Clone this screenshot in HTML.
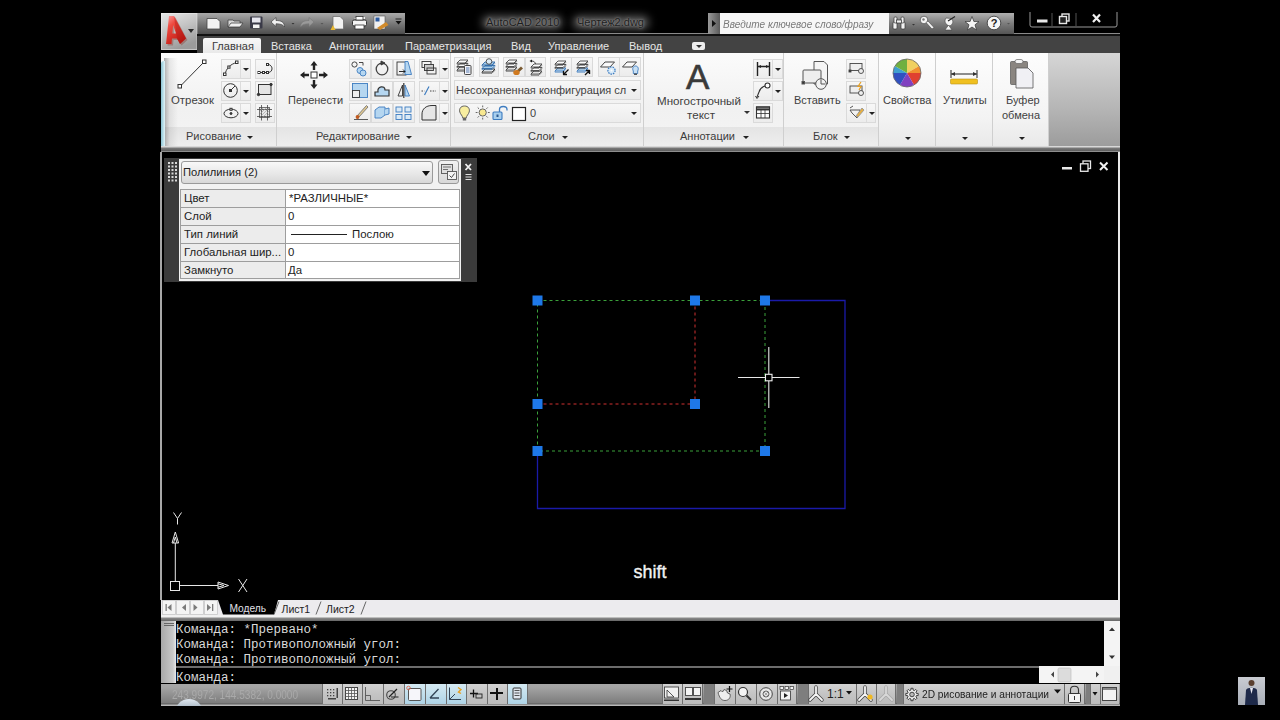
<!DOCTYPE html>
<html><head><meta charset="utf-8">
<style>
*{margin:0;padding:0;box-sizing:border-box}
html,body{width:1280px;height:720px;overflow:hidden;background:#000}
body{position:relative;font-family:"Liberation Sans",sans-serif;font-size:11px;color:#333;-webkit-font-smoothing:antialiased}
.a{position:absolute}
.t{position:absolute;white-space:nowrap;line-height:1}
svg{position:absolute;overflow:visible}
/* title */
#appbtn{left:161px;top:13px;width:37px;height:37px;background:#555}
#qat{left:197px;top:13px;width:208px;height:21px;background:linear-gradient(#a9a9a9,#7a7a7a 50%,#4d4d4d)}
#search{left:708px;top:13px;width:181px;height:21px;background:#f6f6f6}
#searcharr{left:708px;top:13px;width:12px;height:21px;background:linear-gradient(90deg,#9a9a9a,#5a5a5a)}
#info{left:889px;top:13px;width:125px;height:21px;background:linear-gradient(#b0b0b0,#7c7c7c 50%,#555)}
#tabrow{left:197px;top:34px;width:923px;height:19px;background:#434343;border-top:2px solid #111}
#tabact{left:203px;top:38px;width:58px;height:15px;background:linear-gradient(#f8f8f8,#e9e9e9);border-radius:2px 2px 0 0}
.tab{top:41px;font-size:11px;color:#e6e6e6}
/* ribbon */
#ribbon{left:161px;top:53px;width:959px;height:93px;background:#f4f4f4}
.panel{position:absolute;top:0;height:93px;background:linear-gradient(#fbfbfb,#f1f1f1 60%,#f4f4f4);border-right:1px solid #cfcfcf}
.ptitle{position:absolute;left:0;right:0;bottom:0;height:19px;background:linear-gradient(#e4e4e4,#eeeeee)}
.ptxt{position:absolute;top:4px;font-size:11px;color:#3c3c3c;white-space:nowrap;line-height:1}
.btn{position:absolute;border:1px solid #dadada;background:linear-gradient(#f7f7f7,#ececec)}
.lbl{position:absolute;font-size:11px;color:#3f3f3f;white-space:nowrap;line-height:1}
.dd{position:absolute;width:0;height:0;border-left:3px solid transparent;border-right:3px solid transparent;border-top:3.5px solid #222;margin-left:.5px;margin-top:.5px}
#ribbot{left:161px;top:146px;width:959px;height:6px;background:linear-gradient(#d8d8d8 0,#d8d8d8 1px,#7a7a7a 2px,#5e5e5e 5px,#bdbdbd 6px)}
#gray{left:1049px;top:53px;width:71px;height:93px;background:linear-gradient(#d6d6d6,#b5b5b5 60%,#9c9c9c)}
/* drawing */
#leftedge{left:160px;top:152px;width:2px;height:448px;background:#a8a8a8}
#rightedge{left:1118px;top:152px;width:2px;height:448px;background:#e8e8e8}
/* palette */
#pal{left:164px;top:158px;width:313px;height:124px;background:#3b3b3b}
#palin{left:179px;top:159px;width:282px;height:122px;background:#f2f2f2}
/* tabs */
#mtabs{left:161px;top:600px;width:959px;height:15px;background:#ecebee}
#mtabbot{left:161px;top:615px;width:959px;height:6px;background:linear-gradient(#f0f0f0 0,#f0f0f0 2px,#8a8a8a 3px,#666 6px)}
#cmdstrip{left:161px;top:621px;width:15px;height:62px;background:linear-gradient(90deg,#a8a8a8,#c8c8c8 80%,#e8e8e8)}
.cmd{position:absolute;left:176px;font-family:"Liberation Mono",monospace;font-size:12.5px;color:#dadada;white-space:pre;line-height:1}
#status{left:161px;top:684px;width:959px;height:22px;background:linear-gradient(#a6a6a6 0,#a4a4a4 3px,#8e8e8e 12px,#7c7c7c 19px,#5a5a5a 20px,#c0c0c0 21px,#b0b0b0 22px)}
.sb{position:absolute;top:684px;height:20px;background:linear-gradient(#d2d2d2,#c4c4c4 50%,#bcbcbc);border-left:1px solid #6e6e6e}
.sbon{background:linear-gradient(#d4e9f2,#c2dfec 50%,#aed3e6)}
.sgap{position:absolute;top:684px;height:20px;background:#7e7e7e}
</style></head><body>

<!-- ======= TITLE BAR ======= -->
<div class="a" id="appbtn"></div>
<div class="a" id="qat"></div>
<div class="a" style="left:482px;top:16px;width:80px;height:13px;background:#5a5a5a;filter:blur(4px);border-radius:6px"></div>
<div class="a" style="left:573px;top:16px;width:76px;height:13px;background:#5a5a5a;filter:blur(4px);border-radius:6px"></div>
<div class="t" style="left:486px;top:17px;font-size:11px;color:#1e1e1e;text-shadow:0 0 2px #9a9a9a,0 0 4px #808080">AutoCAD 2010</div>
<div class="t" style="left:577px;top:17px;font-size:11px;color:#1e1e1e;text-shadow:0 0 2px #9a9a9a,0 0 4px #808080">Чертеж2.dwg</div>
<div class="a" style="left:405px;top:33px;width:303px;height:1px;background:#8a8a8a"></div>
<div class="a" id="search"></div>
<div class="a" id="searcharr"></div>
<div class="t" style="left:723px;top:19px;font-size:11px;font-style:italic;color:#7a7a7a;transform:scaleX(.91);transform-origin:0 0">Введите ключевое слово/фразу</div>
<div class="a" id="info"></div>
<div class="a" style="left:1014px;top:33px;width:106px;height:1px;background:#8a8a8a"></div>


<!-- app logo -->
<svg class="a" style="left:161px;top:13px" width="36" height="37" viewBox="161 13 36 37">
 <defs><linearGradient id="ared" x1="0" y1="0" x2=".6" y2="1"><stop offset="0" stop-color="#f7a0a0"/><stop offset=".35" stop-color="#ee4a40"/><stop offset="1" stop-color="#c01a12"/></linearGradient>
 <linearGradient id="abg" x1="0" y1="0" x2=".4" y2="1"><stop offset="0" stop-color="#e8e8e8"/><stop offset=".5" stop-color="#c4c4c4"/><stop offset="1" stop-color="#9c9c9c"/></linearGradient></defs>
 <rect x="161" y="13" width="36" height="37" fill="url(#abg)"/>
 <rect x="161.5" y="13.5" width="35.5" height="36" fill="none" stroke="#f0f0f0" stroke-opacity=".5" stroke-width="1"/>
 <path d="M166 44 L169 16 L174 16 L186 38.5 L180 44 L177 38.5 L172 38.5 L171.5 44 Z M172.3 33.5 L176 33.5 L173.2 25 Z" fill="#8a2a20" opacity=".35" transform="translate(1.5 1.5)" fill-rule="evenodd"/>
 <path d="M166 44 L169 16 L174 16 L186 38.5 L180 44 L177 38.5 L172 38.5 L171.5 44 Z M172.3 33.5 L176 33.5 L173.2 25 Z" fill="url(#ared)" fill-rule="evenodd"/>
 <path d="M174 16 L186 38.5 L180 44 L177 38.5 Z" fill="#a81410" opacity=".35"/>
 <path d="M188 29 L194 29 L191 33 Z" fill="#2a2a2a"/>
</svg>
<!-- QAT icons -->
<svg class="a" style="left:197px;top:13px" width="208" height="21" viewBox="197 13 208 21">
 <path d="M207 18.5 H217 L220 21.5 V29 H207 Z" fill="#f2f2f2" stroke="#444" stroke-width=".8"/>
 <path d="M228 20 H233 L234 21 H240 V27 H228 Z" fill="#d8d8d8" stroke="#444" stroke-width=".8"/><path d="M228 27 L231 23 H243 L240 27 Z" fill="#eee" stroke="#444" stroke-width=".8"/>
 <rect x="250" y="16.5" width="12.5" height="12" rx="1" fill="#3a3a48"/><rect x="252" y="17.5" width="8.5" height="5" fill="#e6e6ee"/><rect x="253" y="24.5" width="6.5" height="3.5" fill="#f4f4f4"/>
 <path d="M271 22 L276 17.5 V20.5 C281 20.5 284.5 22 284.5 27 C283 24.5 280 23.8 276 23.8 V26.5 Z" fill="#f0f0f0" stroke="#444" stroke-width=".7"/>
 <path d="M291.5 23 H294.5 L293 24.5 Z" fill="#333"/>
 <path d="M314 22 L309 17.5 V20.5 C304 20.5 300.5 22 300.5 27 C302 24.5 305 23.8 309 23.8 V26.5 Z" fill="#9a9a9a" stroke="#777" stroke-width=".6"/>
 <path d="M320.5 23 H323.5 L322 24.5 Z" fill="#555"/>
 <path d="M333 16.5 H340 L343.5 20 V29 H333 Z" fill="#f2f2f2" stroke="#666" stroke-width=".7"/><path d="M330.5 30 L333 25 L335.5 30 Z" fill="#e8b830"/>
 <path d="M354 19 H365 V17 H357 Z" fill="#eee"/><rect x="352.5" y="20" width="14" height="6" rx="1.5" fill="#f4f4f4" stroke="#333" stroke-width="1"/><rect x="355" y="25" width="9" height="4" fill="#fff" stroke="#333" stroke-width=".8"/><rect x="356" y="16.5" width="7" height="3.5" fill="#fff" stroke="#333" stroke-width=".8"/>
 <rect x="374" y="16" width="11" height="13" fill="#f0f0f0" stroke="#555" stroke-width=".6"/><rect x="375.5" y="17.5" width="4" height="4" fill="#2c5aa0"/><path d="M377 28 L386 22 L388.5 25 L380 30 Z" fill="#d08a2a"/>
 <rect x="395.5" y="18.5" width="6" height="1" fill="#222"/><path d="M395.5 21 H401.5 L398.5 24.5 Z" fill="#111"/>
</svg>
<!-- search arrow -->
<svg class="a" style="left:708px;top:13px" width="12" height="21" viewBox="708 13 12 21"><path d="M712 20 L716 23.5 L712 27 Z" fill="#111"/></svg>
<!-- infocenter icons -->
<svg class="a" style="left:889px;top:13px" width="125" height="21" viewBox="889 13 125 21">
 <g fill="#f2f2f2" stroke="#333" stroke-width=".7">
  <rect x="893" y="22" width="4" height="7" rx="1"/><rect x="901" y="22" width="4" height="7" rx="1"/><rect x="894" y="17" width="3" height="6" rx="1"/><rect x="901" y="17" width="3" height="6" rx="1"/><rect x="896.5" y="20" width="5" height="3"/>
 </g>
 <path d="M912 24 H915 L913.5 25.5 Z" fill="#333"/>
 <g><circle cx="924" cy="20" r="3.8" fill="#f4f4f4" stroke="#444" stroke-width=".7"/><circle cx="923.5" cy="19.5" r="1.2" fill="#777"/><path d="M926 22.5 L932 29 L934 27.5 L928 21 Z" fill="#f4f4f4" stroke="#444" stroke-width=".6"/></g>
 <g><path d="M946 18 C944 21 945 25 950 26 C953 24 954 21 951 18.5 Z" fill="#f4f4f4" stroke="#444" stroke-width=".6"/><path d="M948 21 L955 16.5" stroke="#222" stroke-width="1.2"/><path d="M945 30 L948.5 25 L952 30 Z" fill="#f4f4f4" stroke="#444" stroke-width=".6"/></g>
 <path d="M972 16.5 L973.9 21.5 L979 21.6 L975 24.8 L976.5 30 L972 27 L967.5 30 L969 24.8 L965 21.6 L970.1 21.5 Z" fill="#f4f4f4" stroke="#333" stroke-width=".7"/>
 <circle cx="994" cy="23" r="6.8" fill="#f6f6f6" stroke="#333" stroke-width=".8"/>
 <text x="994" y="27.3" font-family="Liberation Sans" font-weight="bold" font-size="11" text-anchor="middle" fill="#222">?</text>
 <path d="M1007 23 H1010 L1008.5 24.5 Z" fill="#555"/>
</svg>
<!-- window controls -->
<svg class="a" style="left:1028px;top:10px" width="92" height="20" viewBox="1028 10 92 20">
 <path d="M1030 12 V25 Q1030 27 1032 27 H1115 Q1117 27 1117 25 V12" fill="none" stroke="#9a9a9a" stroke-width="1"/>
 <path d="M1052 13 V26 M1076 13 V26" stroke="#555" stroke-width="1"/>
 <rect x="1037" y="19.5" width="10.5" height="3" fill="#e8e8e8"/>
 <rect x="1062" y="14" width="7" height="7" fill="none" stroke="#e8e8e8" stroke-width="1.4"/><rect x="1059.5" y="16.5" width="7" height="7" fill="#222" stroke="#e8e8e8" stroke-width="1.4"/>
 <path d="M1093 14.5 L1100 22 M1100 14.5 L1093 22" stroke="#f0f0f0" stroke-width="2.2"/>
</svg>

<!-- tab row -->
<div class="a" id="tabrow"></div>
<div class="a" id="tabact"></div>
<div class="t tab" style="left:212px;color:#3a3a3a">Главная</div>
<div class="t tab" style="left:271px">Вставка</div>
<div class="t tab" style="left:329px">Аннотации</div>
<div class="t tab" style="left:405px">Параметризация</div>
<div class="t tab" style="left:511px">Вид</div>
<div class="t tab" style="left:548px">Управление</div>
<div class="t tab" style="left:629px">Вывод</div>
<div class="a" style="left:692px;top:42px;width:13px;height:8px;background:#eee;border-radius:2px"></div><div class="dd" style="left:695px;top:44px;border-top-color:#333"></div>

<!-- ======= RIBBON ======= -->
<div class="a" id="ribbon">
<!-- P1 Рисование -->
<div class="panel" style="left:0;width:116px"><div class="ptitle"></div></div>
<!-- P2 -->
<div class="panel" style="left:116px;width:174px"><div class="ptitle"></div></div>
<!-- P3 -->
<div class="panel" style="left:290px;width:193px"><div class="ptitle"></div></div>
<!-- P4 -->
<div class="panel" style="left:483px;width:140px"><div class="ptitle"></div></div>
<!-- P5 -->
<div class="panel" style="left:623px;width:95px"><div class="ptitle"></div></div>
<!-- P6 -->
<div class="panel" style="left:718px;width:57px;background:linear-gradient(#fdfdfd,#f3f3f3 70%,#e9e9e9)"></div>
<div class="panel" style="left:775px;width:57px;background:linear-gradient(#fdfdfd,#f3f3f3 70%,#e9e9e9)"></div>
<div class="panel" style="left:832px;width:56px;background:linear-gradient(#fdfdfd,#f3f3f3 70%,#e9e9e9)"></div>
</div>
<div class="a" id="gray"></div>
<!-- ribbon content (page coords) -->
<div class="a" style="left:164px;top:58px;width:14px;height:88px;background:linear-gradient(90deg,rgba(80,80,80,.45),rgba(120,120,120,.15) 40%,rgba(255,255,255,0))"></div>
<div class="a" style="left:161px;top:61px;width:4px;height:85px;background:linear-gradient(90deg,#8cc4d4,#e2f4f8);border-radius:3px 0 0 0"></div>
<!-- P1 buttons -->
<div class="btn" style="left:221px;top:59px;width:30px;height:20px"></div><div class="a" style="left:240px;top:60px;width:1px;height:18px;background:#dcdcdc"></div>
<div class="btn" style="left:221px;top:81px;width:30px;height:20px"></div><div class="a" style="left:240px;top:82px;width:1px;height:18px;background:#dcdcdc"></div>
<div class="btn" style="left:221px;top:103px;width:30px;height:20px"></div><div class="a" style="left:240px;top:104px;width:1px;height:18px;background:#dcdcdc"></div>
<div class="dd" style="left:242px;top:67px"></div><div class="dd" style="left:242px;top:89px"></div><div class="dd" style="left:242px;top:111px"></div>
<div class="btn" style="left:255px;top:59px;width:20px;height:20px"></div>
<div class="btn" style="left:255px;top:81px;width:20px;height:20px"></div>
<div class="btn" style="left:255px;top:103px;width:20px;height:20px"></div>
<div class="lbl" style="left:171px;top:95px;font-size:11.4px">Отрезок</div>
<div class="ptxt" style="left:186px;top:131px">Рисование</div><div class="dd" style="left:246px;top:135px"></div>
<!-- P2 buttons -->
<div class="btn" style="left:349px;top:59px;width:22px;height:20px"></div>
<div class="btn" style="left:371px;top:59px;width:22px;height:20px"></div>
<div class="btn" style="left:393px;top:59px;width:22px;height:20px"></div>
<div class="btn" style="left:349px;top:81px;width:22px;height:20px"></div>
<div class="btn" style="left:371px;top:81px;width:22px;height:20px"></div>
<div class="btn" style="left:393px;top:81px;width:22px;height:20px"></div>
<div class="btn" style="left:349px;top:103px;width:22px;height:20px"></div>
<div class="btn" style="left:371px;top:103px;width:22px;height:20px"></div>
<div class="btn" style="left:393px;top:103px;width:22px;height:20px"></div>
<div class="btn" style="left:419px;top:59px;width:30px;height:20px"></div><div class="a" style="left:439px;top:60px;width:1px;height:18px;background:#dcdcdc"></div>
<div class="btn" style="left:419px;top:81px;width:30px;height:20px"></div><div class="a" style="left:439px;top:82px;width:1px;height:18px;background:#dcdcdc"></div>
<div class="btn" style="left:419px;top:103px;width:30px;height:20px"></div><div class="a" style="left:439px;top:104px;width:1px;height:18px;background:#dcdcdc"></div>
<div class="dd" style="left:441px;top:67px"></div><div class="dd" style="left:441px;top:89px"></div><div class="dd" style="left:441px;top:111px"></div>
<div class="lbl" style="left:288px;top:95px">Перенести</div>
<div class="ptxt" style="left:316px;top:131px">Редактирование</div><div class="dd" style="left:405px;top:135px"></div>
<!-- P3 -->
<div class="btn" style="left:454px;top:57px;width:20px;height:20px"></div>
<div class="btn" style="left:479px;top:57px;width:20px;height:20px"></div>
<div class="btn" style="left:503px;top:57px;width:22px;height:20px"></div><div class="btn" style="left:525px;top:57px;width:21px;height:20px"></div>
<div class="btn" style="left:550px;top:57px;width:22px;height:20px"></div><div class="btn" style="left:571px;top:57px;width:22px;height:20px"></div>
<div class="btn" style="left:598px;top:57px;width:22px;height:20px"></div><div class="btn" style="left:619px;top:57px;width:22px;height:20px"></div>
<div class="btn" style="left:454px;top:80px;width:187px;height:20px"></div>
<div class="lbl" style="left:456px;top:85px">Несохраненная конфигурация сл</div><div class="dd" style="left:630px;top:88px"></div>
<div class="btn" style="left:454px;top:103px;width:187px;height:20px"></div>
<div class="lbl" style="left:530px;top:108px">0</div><div class="dd" style="left:630px;top:111px"></div>
<div class="ptxt" style="left:528px;top:131px">Слои</div><div class="dd" style="left:561px;top:135px"></div>
<!-- P4 -->
<div class="t" style="left:686px;top:59px;font-size:35px;color:#3a3a3a;-webkit-text-stroke:.6px #3a3a3a">A</div>
<div class="lbl" style="left:657px;top:95px;font-size:11.6px">Многострочный</div>
<div class="lbl" style="left:687px;top:109px;font-size:11.6px">текст</div>
<div class="dd" style="left:743px;top:110px;border-top-color:#333"></div>
<div class="btn" style="left:753px;top:59px;width:30px;height:20px"></div><div class="a" style="left:772px;top:60px;width:1px;height:18px;background:#dcdcdc"></div>
<div class="btn" style="left:753px;top:81px;width:30px;height:20px"></div><div class="a" style="left:772px;top:82px;width:1px;height:18px;background:#dcdcdc"></div>
<div class="btn" style="left:753px;top:103px;width:20px;height:20px"></div>
<div class="dd" style="left:774px;top:67px"></div><div class="dd" style="left:774px;top:89px"></div>
<div class="ptxt" style="left:680px;top:131px">Аннотации</div><div class="dd" style="left:742px;top:135px"></div>
<!-- P5 -->
<div class="lbl" style="left:794px;top:95px">Вставить</div>
<div class="btn" style="left:846px;top:59px;width:20px;height:20px"></div>
<div class="btn" style="left:846px;top:81px;width:20px;height:20px"></div>
<div class="btn" style="left:846px;top:103px;width:30px;height:20px"></div><div class="a" style="left:866px;top:104px;width:1px;height:18px;background:#dcdcdc"></div>
<div class="dd" style="left:868px;top:111px"></div>
<div class="ptxt" style="left:813px;top:131px">Блок</div><div class="dd" style="left:843px;top:135px"></div>
<!-- P6-8 -->
<div class="lbl" style="left:883px;top:95px">Свойства</div><div class="dd" style="left:904px;top:136px"></div>
<div class="lbl" style="left:943px;top:95px">Утилиты</div><div class="dd" style="left:961px;top:136px"></div>
<div class="lbl" style="left:1006px;top:95px">Буфер</div>
<div class="lbl" style="left:1002px;top:110px">обмена</div><div class="dd" style="left:1018px;top:136px"></div>

<div class="a" id="ribbot"></div>


<!-- ribbon icons -->
<svg class="a" style="left:161px;top:53px" width="959" height="93" viewBox="161 53 959 93">
 <g fill="none" stroke="#333" stroke-width="1">
  <!-- line -->
  <path d="M180 86.5 L204 62"/><rect x="178" y="84.5" width="3.5" height="3.5" fill="#fff"/><rect x="202.5" y="60" width="3.5" height="3.5" fill="#fff"/>
  <!-- polyline arc -->
  <path d="M225 74.5 C226 69 230 64 237 62.5"/><rect x="223.5" y="73" width="2.5" height="2.5" fill="#fff"/><rect x="235.5" y="61" width="2.5" height="2.5" fill="#fff"/><rect x="227.8" y="66" width="2.2" height="2.2" fill="#fff"/>
  <!-- circle -->
  <circle cx="230.5" cy="90.5" r="6.8"/><path d="M230.5 90.5 L235 86"/><rect x="229.5" y="89.5" width="2" height="2" fill="#333"/>
  <!-- ellipse -->
  <ellipse cx="231" cy="113.5" rx="7" ry="4.3"/><circle cx="231" cy="113.5" r="1" fill="#333"/><rect x="230" y="108.3" width="2" height="2" fill="#fff"/>
  <!-- spline-like -->
  <path d="M259 72.5 H268 C272 72.5 273 68 271 66 C270 64.5 268.5 64.5 267.5 64.5"/><rect x="258" y="71.5" width="2" height="2" fill="#fff"/><rect x="262.5" y="71.5" width="2" height="2" fill="#fff"/><rect x="266.5" y="63.5" width="2" height="2" fill="#fff"/><rect x="266.5" y="71.5" width="2" height="2" fill="#fff"/>
  <!-- rect -->
  <rect x="258.5" y="84.5" width="12.5" height="10" fill="#e4e4e4"/><circle cx="258.5" cy="94.5" r="1.2" fill="#333"/><circle cx="271" cy="84.5" r="1.2" fill="#333"/>
  <!-- hatch -->
  <rect x="259.5" y="107.5" width="10" height="10" fill="#e8e8e8" stroke="#555" stroke-width=".8"/><path d="M257 109.5 H272 M257 116.5 H272 M261.5 105 V120.5 M267.5 105 V120.5" stroke="#444" stroke-width=".8"/><path d="M260 111 L263 108 M260 114 L266 108 M260 117 L269 108 M263 117 L269 111 M266 117 L269 114" stroke="#999" stroke-width=".6"/>
 </g>
 <!-- move -->
 <g fill="#222">
  <rect x="311" y="72" width="6" height="6" fill="#fff" stroke="#333" stroke-width="1"/>
  <path d="M314 61 L317.5 65.5 H315.2 V70 H312.8 V65.5 H310.5 Z"/>
  <path d="M314 89 L317.5 84.5 H315.2 V80 H312.8 V84.5 H310.5 Z"/>
  <path d="M300 75 L304.5 71.5 V73.8 H309 V76.2 H304.5 V78.5 Z"/>
  <path d="M328 75 L323.5 71.5 V73.8 H319 V76.2 H323.5 V78.5 Z"/>
 </g>
 <g fill="none" stroke="#333" stroke-width=".9">
  <!-- copy -->
  <circle cx="354.5" cy="64.5" r="2.6"/><circle cx="360" cy="70.5" r="3" fill="#b5d6f0" stroke="#3d7cc0"/><circle cx="363" cy="73" r="3" fill="#b5d6f0" stroke="#3d7cc0"/><path d="M359 62.5 H363 V65.5"/>
  <!-- rotate -->
  <circle cx="382" cy="69" r="5.8" stroke-width="1.3" stroke="#444"/><path d="M381 61 L385 63 L381 65 Z" fill="#444"/>
  <!-- stretch -->
  <rect x="397" y="62" width="9" height="13"/><path d="M405 61.5 H408 L411.5 74.5 H405 Z" fill="#b5d6f0" stroke="#3d7cc0"/><path d="M399 71.5 H405 M403 69.5 L405 71.5 L403 73.5" stroke="#111"/>
  <!-- draworder -->
  <rect x="422" y="61.5" width="9" height="6"/><rect x="424.5" y="64.5" width="9" height="6" fill="#ccc"/><rect x="427" y="68" width="9" height="6"/>
  <!-- scale -->
  <rect x="352.5" y="83.5" width="15" height="14" fill="#b5d6f0" stroke="#3d7cc0"/><rect x="352.5" y="90.5" width="7" height="7" fill="#eee" stroke="#333"/>
  <!-- fillet-like -->
  <path d="M375 96 V92 H378 C377 86 385 85 385 90 H389 V96 Z" fill="#b5d6f0" stroke="#333" stroke-width="1.2"/>
  <!-- mirror -->
  <path d="M398 96 L402.5 85 V96 Z"/><path d="M405 96 V85 L409.5 96 Z" fill="#b5d6f0" stroke="#3d7cc0"/><path d="M403.8 83 V98" stroke-width="1.2"/>
  <!-- break -->
  <path d="M421.5 91 H424.5 M430 91 H436" stroke-dasharray="1.5 1.2"/><path d="M424.5 95 L429 86.5" stroke="#3d7cc0" stroke-width="1.2"/>
  <!-- erase -->
  <path d="M354 119.5 H368" stroke-width=".8"/><path d="M357 116 L366.5 105.5 L368 107 L359 117" fill="#e0c890" stroke="#777"/><circle cx="357.5" cy="117" r="1.9" fill="#c05a20" stroke="none"/>
  <!-- offset/3d -->
  <path d="M375 110 L379 107 H385 V115 L381 118 H375 Z" fill="#b5d6f0" stroke="#3d7cc0"/><path d="M385 109 L389 108 V114 L385 115" fill="#b5d6f0" stroke="#3d7cc0"/>
  <!-- array -->
  <rect x="396" y="107" width="6" height="5" stroke="#3d7cc0" fill="#dbeaf6"/><rect x="405" y="107" width="6" height="5" stroke="#3d7cc0" fill="#dbeaf6"/><rect x="396" y="114.5" width="6" height="5" stroke="#3d7cc0" fill="#dbeaf6"/><rect x="405" y="114.5" width="6" height="5" stroke="#3d7cc0" fill="#dbeaf6"/>
  <!-- fillet -->
  <path d="M422 120 V114 C422 109 426 105.5 432 105.5 H436 V120 Z" fill="#e6e6e6" stroke="#333" stroke-width="1"/>
 </g>
 <!-- layer icons -->
 <g stroke-linejoin="round">
<path d="M460 67 H468 L465 70 H457 Z" fill="#fafafa" stroke="#444" stroke-width=".9"/><path d="M457 70 V71.2 H465 L468 68.2" fill="none" stroke="#444" stroke-width=".7"/><path d="M460 63.5 H468 L465 66.5 H457 Z" fill="#fafafa" stroke="#444" stroke-width=".9"/><path d="M457 66.5 V67.7 H465 L468 64.7" fill="none" stroke="#444" stroke-width=".7"/><path d="M460 60 H468 L465 63 H457 Z" fill="#fafafa" stroke="#444" stroke-width=".9"/><path d="M457 63 V64.2 H465 L468 61.2" fill="none" stroke="#444" stroke-width=".7"/><rect x="464.5" y="65.5" width="6.5" height="9" rx=".8" fill="#f4f4f8" stroke="#444" stroke-width="1"/><path d="M466 68 H469.5 M466 70 H469.5 M466 72 H469.5" stroke="#2c5aa0" stroke-width=".8"/>
<path d="M485 69 H495 L492 72 H482 Z" fill="#f4f4f4" stroke="#333" stroke-width=".9"/><path d="M482 72 V73.2 H492 L495 70.2" fill="none" stroke="#333" stroke-width=".7"/><path d="M485 65.5 H495 L492 68.5 H482 Z" fill="#a8cdea" stroke="#2f6aa8" stroke-width=".9"/><path d="M482 68.5 V69.7 H492 L495 66.7" fill="none" stroke="#2f6aa8" stroke-width=".7"/><path d="M485 62 H495 L492 65 H482 Z" fill="#a8cdea" stroke="#2f6aa8" stroke-width=".9"/><path d="M482 65 V66.2 H492 L495 63.2" fill="none" stroke="#2f6aa8" stroke-width=".7"/><circle cx="489" cy="61.5" r="2.8" fill="#dcecf8" stroke="#444" stroke-width=".9"/>
<path d="M509 67 H517 L514 70 H506 Z" fill="#fafafa" stroke="#444" stroke-width=".9"/><path d="M506 70 V71.2 H514 L517 68.2" fill="none" stroke="#444" stroke-width=".7"/><path d="M509 63.5 H517 L514 66.5 H506 Z" fill="#fafafa" stroke="#444" stroke-width=".9"/><path d="M506 66.5 V67.7 H514 L517 64.7" fill="none" stroke="#444" stroke-width=".7"/><path d="M509 60 H517 L514 63 H506 Z" fill="#fafafa" stroke="#444" stroke-width=".9"/><path d="M506 63 V64.2 H514 L517 61.2" fill="none" stroke="#444" stroke-width=".7"/><path d="M516 71 L521 66.5 L523 68.5 L518 73 Z" fill="#7a5a30"/><ellipse cx="516.5" cy="72.5" rx="3.2" ry="2.6" fill="#d07a20"/>
<path d="M534 71 H542 L539 74 H531 Z" fill="#fafafa" stroke="#444" stroke-width=".9"/><path d="M531 74 V75.2 H539 L542 72.2" fill="none" stroke="#444" stroke-width=".7"/><path d="M534 67.5 H542 L539 70.5 H531 Z" fill="#fafafa" stroke="#444" stroke-width=".9"/><path d="M531 70.5 V71.7 H539 L542 68.7" fill="none" stroke="#444" stroke-width=".7"/><path d="M534 64 H542 L539 67 H531 Z" fill="#fafafa" stroke="#444" stroke-width=".9"/><path d="M531 67 V68.2 H539 L542 65.2" fill="none" stroke="#444" stroke-width=".7"/><path d="M529.5 61 L532 59.5 V62.5 Z" fill="#111"/><path d="M531.5 61 C534 61 535 62 535.5 64" fill="none" stroke="#333" stroke-width=".9"/>
<path d="M558 68 H566 L563 71 H555 Z" fill="#b8d8f0" stroke="#3d7cc0" stroke-width=".9"/><path d="M555 71 V72.2 H563 L566 69.2" fill="none" stroke="#3d7cc0" stroke-width=".7"/><path d="M558 64.5 H566 L563 67.5 H555 Z" fill="#fafafa" stroke="#444" stroke-width=".9"/><path d="M555 67.5 V68.7 H563 L566 65.7" fill="none" stroke="#444" stroke-width=".7"/><path d="M558 61 H566 L563 64 H555 Z" fill="#fafafa" stroke="#444" stroke-width=".9"/><path d="M555 64 V65.2 H563 L566 62.2" fill="none" stroke="#444" stroke-width=".7"/><path d="M568.5 69.5 L564 74 M563.5 71 V74.5 H567" fill="none" stroke="#111" stroke-width="1.3"/>
<path d="M580 68 H588 L585 71 H577 Z" fill="#b8d8f0" stroke="#3d7cc0" stroke-width=".9"/><path d="M577 71 V72.2 H585 L588 69.2" fill="none" stroke="#3d7cc0" stroke-width=".7"/><path d="M580 64.5 H588 L585 67.5 H577 Z" fill="#fafafa" stroke="#444" stroke-width=".9"/><path d="M577 67.5 V68.7 H585 L588 65.7" fill="none" stroke="#444" stroke-width=".7"/><path d="M580 61 H588 L585 64 H577 Z" fill="#fafafa" stroke="#444" stroke-width=".9"/><path d="M577 64 V65.2 H585 L588 62.2" fill="none" stroke="#444" stroke-width=".7"/><path d="M585 75 L589.5 70.5 M586 70.5 H589.5 V74" fill="none" stroke="#111" stroke-width="1.4"/>
<path d="M605 62 H614.5 L610 67 H600.5 Z" fill="#fafafa" stroke="#444" stroke-width="1"/><circle cx="611.5" cy="70.5" r="3.6" fill="#d8eaf8" stroke="#3d7cc0" stroke-width="1.2" stroke-dasharray="1.6 .9"/><circle cx="611.5" cy="70.5" r="1" fill="#fff"/>
<path d="M627 62 H636.5 L632 67 H622.5 Z" fill="#fafafa" stroke="#444" stroke-width="1"/><path d="M635.5 66 C633 66 632 68.5 633.3 71 V73.5 H637.7 V71 C639 68.5 638 66 635.5 66 Z" fill="#c8e0f4" stroke="#3d7cc0" stroke-width=".9"/><rect x="634" y="73.5" width="3" height="1.5" fill="#555"/>
 </g>
 <!-- layer state row -->
 <path d="M464.5 106 C460.5 106 459 109 459.8 112 C460.5 114.5 462.5 115.5 462.8 118 H466.2 C466.5 115.5 468.5 114.5 469.2 112 C470 109 468.5 106 464.5 106 Z" fill="#f8eea0" stroke="#555" stroke-width=".9"/><rect x="462.8" y="118" width="3.4" height="2.5" fill="#666"/>
 <g stroke="#666" stroke-width="1"><circle cx="482.7" cy="112.5" r="3.6" fill="#f8e890"/><path d="M482.7 105.5 V107.3 M482.7 117.7 V119.5 M475.7 112.5 H477.5 M487.9 112.5 H489.7 M477.7 107.5 L479 108.8 M486.4 116.2 L487.7 117.5 M477.7 117.5 L479 116.2 M486.4 108.8 L487.7 107.5"/></g>
 <rect x="493" y="112" width="9" height="7.5" rx="1" fill="#a8cfee" stroke="#3d7cc0" stroke-width="1.1"/><path d="M499.5 112 V109.5 C499.5 105.5 507 105.5 507 109.5 V110.5" fill="none" stroke="#3d7cc0" stroke-width="1.3"/><rect x="496.5" y="114.5" width="2" height="2.5" fill="#2a5a90"/>
 <rect x="512.5" y="107.5" width="13" height="13" fill="#fff" stroke="#222" stroke-width="1.2"/>
 <!-- big A -->
 <!-- dim -->
 <g stroke="#333" fill="none" stroke-width="1.1">
  <path d="M757.5 62 V76 M769.5 62 V76 M757.5 66.5 H769.5" stroke="#222" stroke-width="1.4"/><path d="M758 66.5 L761 65 V68 Z M769 66.5 L766 65 V68 Z" fill="#222" stroke="none"/>
  <path d="M757 97 L759 92 C760 88 762 87 765 86" /><circle cx="767.5" cy="85.5" r="2.5" fill="#fff"/><path d="M755.5 96 L757 98.5 L759 96" stroke-width="1"/>
  <rect x="756.5" y="107" width="13" height="11" fill="#fff"/><path d="M756.5 110 H769.5 M756.5 113.5 H769.5 M761 110 V118 M765 110 V118" stroke-width=".8"/><rect x="756.5" y="107" width="13" height="2.5" fill="#777"/>
 </g>
 <!-- insert block -->
 <g stroke="#555" fill="#f0f0f0" stroke-width="1">
  <path d="M814 61.5 H824 L827.5 65 V84 H814 Z" fill="#f5f5f5"/>
  <rect x="803" y="70" width="18" height="13" rx="1" fill="#eee"/>
  <circle cx="821" cy="84" r="5.3" fill="#f2f2f2"/><path d="M821 79.5 V84 H825" fill="none"/>
  <rect x="802" y="81.5" width="2.5" height="2.5" fill="#333"/>
 </g>
 <g stroke="#444" fill="#eee" stroke-width=".9">
  <rect x="850" y="63.5" width="12" height="7"/><circle cx="861" cy="71" r="2.5"/><rect x="849" y="70" width="2" height="2" fill="#333"/>
  <rect x="850" y="86" width="12" height="7"/><circle cx="861" cy="93" r="2.5"/><path d="M861 82 L858 86.5 H861 L859 90" stroke="#e8a020" fill="none" stroke-width="1.2"/>
  <path d="M850 108 L853 106 M850 110 H860 L857 118 L852 113 Z" fill="none"/><path d="M856 116 L862 108 L864 110 L858 117 Z" fill="#e8b040" stroke="#999"/>
 </g>
 <!-- color wheel -->
 <g transform="translate(907 73)">
  <path d="M0 0 L0 -14 A14 14 0 0 1 12.1 -7 Z" fill="#f0d060"/>
  <path d="M0 0 L12.1 -7 A14 14 0 0 1 14 0 Z" fill="#f09030"/>
  <path d="M0 0 L14 0 A14 14 0 0 1 7 12.1 Z" fill="#e04030"/>
  <path d="M0 0 L7 12.1 A14 14 0 0 1 -7 12.1 Z" fill="#8040c0"/>
  <path d="M0 0 L-7 12.1 A14 14 0 0 1 -14 0 Z" fill="#3050c0"/>
  <path d="M0 0 L-14 0 A14 14 0 0 1 -12.1 -7 Z" fill="#40a0d0"/>
  <path d="M0 0 L-12.1 -7 A14 14 0 0 1 0 -14 Z" fill="#70b040"/>
  <circle r="14" fill="none" stroke="#666" stroke-width=".8"/>
 </g>
 <!-- ruler -->
 <path d="M951 74 H977" stroke="#333" stroke-width="1.1"/><path d="M951 70 V78 M977 70 V78" stroke="#555" stroke-width="1.3"/><path d="M951 74 L955 72 V76 Z M977 74 L973 72 V76 Z" fill="#333"/>
 <rect x="950.5" y="79" width="27" height="5" rx="1" fill="#f0c020" stroke="#b89018" stroke-width=".6"/>
 <!-- clipboard -->
 <rect x="1010.5" y="61.5" width="17" height="23" rx="1" fill="#8a8580" stroke="#555" stroke-width=".7"/><rect x="1015" y="59.5" width="8" height="4" rx="2" fill="#f4f4f4" stroke="#666" stroke-width=".7"/>
 <path d="M1016 68 H1028 L1033 73 V88 H1016 Z" fill="#f0f0f4" stroke="#555" stroke-width=".8"/>
</svg>

<!-- ======= DRAWING ======= -->
<div class="a" id="leftedge"></div>
<div class="a" id="rightedge"></div>

<!-- palette -->
<div class="a" id="pal"></div>
<div class="a" id="palin"></div>
<svg class="a" style="left:164px;top:158px" width="313" height="124" viewBox="164 158 313 124">
 <g fill="#d8d8d8">
  <rect x="168" y="162" width="2" height="2"/><rect x="171.5" y="162" width="2" height="2"/><rect x="175" y="162" width="2" height="2"/>
  <rect x="168" y="165.5" width="2" height="2"/><rect x="171.5" y="165.5" width="2" height="2"/><rect x="175" y="165.5" width="2" height="2"/>
  <rect x="168" y="169" width="2" height="2"/><rect x="171.5" y="169" width="2" height="2"/><rect x="175" y="169" width="2" height="2"/>
  <rect x="168" y="172.5" width="2" height="2"/><rect x="171.5" y="172.5" width="2" height="2"/><rect x="175" y="172.5" width="2" height="2"/>
  <rect x="168" y="176" width="2" height="2"/><rect x="171.5" y="176" width="2" height="2"/><rect x="175" y="176" width="2" height="2"/>
  <rect x="168" y="179.5" width="2" height="2"/><rect x="171.5" y="179.5" width="2" height="2"/><rect x="175" y="179.5" width="2" height="2"/>
 </g>
 <!-- X and menu -->
 <path d="M465.5 164 L471 170 M471 164 L465.5 170" stroke="#f0f0f0" stroke-width="1.8"/>
 <path d="M465.5 174.5 H471.5 M465.5 177 H471.5 M465.5 179.5 H471.5" stroke="#e0e0e0" stroke-width="1.1"/>
</svg>
<div class="a" style="left:181px;top:161px;width:252px;height:23px;border:1px solid #9a9a9a;border-radius:3px;background:linear-gradient(#f8f8f8,#e6e6e6 60%,#d8d8d8)"></div>
<div class="t" style="left:183px;top:167px;font-size:11.2px;color:#222">Полилиния (2)</div>
<div class="dd" style="left:421px;top:170px;border-top-width:5px;border-left-width:4px;border-right-width:4px;border-top-color:#111"></div>
<div class="a" style="left:438px;top:160px;width:21px;height:24px;border:1px solid #999;border-radius:3px;background:linear-gradient(#f2f2f2,#d8d8d8)"></div>
<svg class="a" style="left:438px;top:160px" width="21" height="24" viewBox="438 160 21 24">
 <rect x="441.5" y="164.5" width="11" height="9" fill="#e0e0e0" stroke="#555" stroke-width=".9"/><path d="M443 167 H451 M443 169.5 H448" stroke="#555" stroke-width=".8"/>
 <rect x="447.5" y="171.5" width="9" height="8" fill="#f4f4f4" stroke="#555" stroke-width=".9"/><path d="M449.5 175.5 L451.5 177.5 L454.5 173.5" fill="none" stroke="#333" stroke-width=".9"/>
</svg>
<!-- table -->
<div class="a" style="left:180px;top:189px;width:280px;height:90px;background:#fff;border:1px solid #9d9d9d"></div>
<div class="a" style="left:181px;top:190px;width:104px;height:88px;background:#ececec"></div>
<div class="a" style="left:285px;top:190px;width:1px;height:88px;background:#9d9d9d"></div>
<div class="a" style="left:181px;top:207px;width:278px;height:1px;background:#9d9d9d"></div>
<div class="a" style="left:181px;top:225px;width:278px;height:1px;background:#9d9d9d"></div>
<div class="a" style="left:181px;top:243px;width:278px;height:1px;background:#9d9d9d"></div>
<div class="a" style="left:181px;top:261px;width:278px;height:1px;background:#9d9d9d"></div>
<div class="t" style="left:184px;top:193px;font-size:11.4px;color:#222">Цвет</div>
<div class="t" style="left:184px;top:211px;font-size:11.4px;color:#222">Слой</div>
<div class="t" style="left:184px;top:229px;font-size:11.4px;color:#222">Тип линий</div>
<div class="t" style="left:184px;top:247px;font-size:11.4px;color:#222">Глобальная шир...</div>
<div class="t" style="left:184px;top:265px;font-size:11.4px;color:#222">Замкнуто</div>
<div class="t" style="left:289px;top:193px;font-size:11.4px;color:#222">*РАЗЛИЧНЫЕ*</div>
<div class="t" style="left:288px;top:211px;font-size:11.4px;color:#222">0</div>
<div class="a" style="left:291px;top:234px;width:56px;height:1px;background:#222"></div>
<div class="t" style="left:352px;top:229px;font-size:11.4px;color:#222">Послою</div>
<div class="t" style="left:288px;top:247px;font-size:11.4px;color:#222">0</div>
<div class="t" style="left:288px;top:265px;font-size:11.4px;color:#222">Да</div>



<!-- geometry -->
<svg class="a" style="left:162px;top:152px" width="956" height="448" viewBox="162 152 956 448">
 <path d="M765 300.5 H845 V508.5 H537.5 V451" fill="none" stroke="#1a1aa8" stroke-width="1.3"/>
 <g stroke="#3aa03a" stroke-width="1" stroke-dasharray="3 3" fill="none">
  <path d="M537.5 300.5 H765 V451 H537.5 Z"/>
 </g>
 <path d="M695 300.5 V404 H537.5" fill="none" stroke="#d03030" stroke-width="1" stroke-dasharray="3 3"/>
 <g fill="#1e78e8">
  <rect x="532.5" y="295.5" width="10" height="10"/><rect x="690" y="295.5" width="10" height="10"/><rect x="760" y="295.5" width="10" height="10"/>
  <rect x="532.5" y="399" width="10" height="10"/><rect x="690" y="399" width="10" height="10"/>
  <rect x="532.5" y="446" width="10" height="10"/><rect x="760" y="446" width="10" height="10"/>
 </g>
 <!-- crosshair -->
 <g stroke="#e8e8e8" stroke-width="1.1"><path d="M738 377.5 H765.5 M772 377.5 H799.5 M768.8 347 V374 M768.8 381 V408"/></g>
 <rect x="765.5" y="374.3" width="6.5" height="6.5" fill="none" stroke="#f0f0f0" stroke-width="1.1"/>
 <!-- UCS -->
 <g stroke="#e8e8e8" stroke-width="1" fill="none">
  <rect x="170.5" y="581.5" width="9" height="9"/>
  <path d="M175.3 581.5 V543 M179.5 585.5 H218"/>
  <path d="M172 543 L175.3 532 L178.6 543 Z M173.5 543 L175.3 537 L177 543"/>
  <path d="M218 582 L228.5 585.5 L218 589 Z M218 583.8 L224 585.5 L218 587.2"/>
  <path d="M173.5 512.5 L177.5 518.5 L181.5 512.5 M177.5 518.5 V524.5"/>
  <path d="M238.5 579 L247 592 M247 579 L238.5 592"/>
 </g>
 <!-- doc window controls -->
 <rect x="1062" y="167" width="10" height="2.5" fill="#e8e8e8"/>
 <rect x="1083" y="161" width="7.5" height="7.5" fill="none" stroke="#e8e8e8" stroke-width="1.3"/><rect x="1080.5" y="163.8" width="7.5" height="7.5" fill="#000" stroke="#e8e8e8" stroke-width="1.3"/>
 <path d="M1100 162.5 L1107.5 170 M1107.5 162.5 L1100 170" stroke="#f0f0f0" stroke-width="2"/>
</svg>
<div class="t" style="left:633.5px;top:562.5px;font-size:18px;color:#f2f2f2;-webkit-text-stroke:.35px #f2f2f2">shift</div>

<!-- model tabs -->
<div class="a" id="mtabs"></div>
<div class="a" id="mtabbot"></div>


<!-- model tab content -->
<svg class="a" style="left:161px;top:600px" width="959" height="21" viewBox="161 600 959 21">
 <g fill="#f4f4f4" stroke="#c8c8c8" stroke-width=".8"><rect x="162.5" y="600.5" width="13" height="14"/><rect x="176.5" y="600.5" width="13" height="14"/><rect x="190.5" y="600.5" width="13" height="14"/><rect x="204.5" y="600.5" width="13" height="14"/></g>
 <g fill="#7a7a7a"><rect x="165.5" y="604" width="1.3" height="7"/><path d="M167.5 607.5 L171.5 604 V611 Z"/><path d="M182 607.5 L186 604 V611 Z"/><path d="M193.5 604 L197.5 607.5 L193.5 611 Z"/><path d="M207 604 L211 607.5 L207 611 Z"/><rect x="212" y="604" width="1.3" height="7"/></g>
 <path d="M218 600 H278 L274 614.5 H223 Z" fill="#000"/>
 <path d="M274 614.5 L279 601.5 M316 614.5 L321 601.5 M361 614.5 L366 601.5" fill="none" stroke="#555" stroke-width=".9"/>
</svg>
<div class="t" style="left:229.5px;top:603.5px;font-size:10.2px;color:#e0e0e8">Модель</div>
<div class="t" style="left:281.5px;top:603.5px;font-size:10.5px;color:#222">Лист1</div>
<div class="t" style="left:326px;top:603.5px;font-size:10.5px;color:#222">Лист2</div>

<!-- command line -->
<div class="a" id="cmdstrip"></div>
<div class="cmd" style="top:623.5px">Команда: *Прервано*</div>
<div class="cmd" style="top:638.5px">Команда: Противоположный угол:</div>
<div class="cmd" style="top:653.5px">Команда: Противоположный угол:</div>
<div class="a" style="left:176px;top:665.5px;width:863px;height:2px;background:#6c6c6c"></div>
<div class="cmd" style="top:671.5px">Команда:</div>


<svg class="a" style="left:161px;top:620px" width="959" height="64" viewBox="161 620 959 64">
 <g fill="#666"><rect x="164" y="623" width="10" height="1"/><rect x="164" y="625" width="10" height="1"/></g>
 <rect x="1104" y="621" width="16" height="45" fill="#f4f4f4"/>
 <path d="M1109 631 L1112 627.5 L1115 631 Z M1109 655.5 L1112 659 L1115 655.5 Z" fill="#333"/>
 <rect x="1039" y="666" width="81" height="17" fill="#f4f4f4"/>
 <path d="M1051 674.5 L1054 671.5 V677.5 Z M1096 671.5 L1099 674.5 L1096 677.5 Z" fill="#444"/>
 <rect x="1058" y="668" width="13" height="14" rx="1.5" fill="#dcdcdc" stroke="#bbb" stroke-width=".6"/>
 <rect x="1104" y="666" width="16" height="17" fill="#f0f0f0"/>
</svg>

<!-- status bar -->
<div class="a" id="status"></div>
<div class="t" style="left:172px;top:689px;font-size:12.5px;color:#a9a9a9;transform:scaleX(.806);transform-origin:0 0">243.9972, 144.5382, 0.0000</div>
<div class="a" style="left:175px;top:699px;width:28px;height:14px;border-radius:14px 14px 0 0;background:linear-gradient(#e0e8f0,#8a9aaa)"></div>
<div class="a" style="left:161px;top:706px;width:959px;height:14px;background:#000"></div>
<div class="sb" style="left:322px;width:20px"></div>
<div class="sb" style="left:342px;width:20px"></div>
<div class="sb" style="left:362px;width:21px"></div>
<div class="sb" style="left:383px;width:21px"></div>
<div class="sb sbon" style="left:404px;width:21px"></div>
<div class="sb sbon" style="left:425px;width:21px"></div>
<div class="sb sbon" style="left:446px;width:20px"></div>
<div class="sb" style="left:466px;width:21px"></div>
<div class="sb" style="left:487px;width:20px"></div>
<div class="sb sbon" style="left:507px;width:20px"></div>
<div class="a" style="left:527px;top:684px;width:1px;height:20px;background:#6e6e6e"></div>
<div class="sb" style="left:662px;width:20px"></div>
<div class="sb" style="left:682px;width:21px;border-right:1px solid #6e6e6e"></div>
<div class="sgap" style="left:704px;width:10px"></div>
<div class="sb" style="left:714px;width:21px"></div>
<div class="sb" style="left:735px;width:21px"></div>
<div class="sb" style="left:756px;width:21px"></div>
<div class="sb" style="left:777px;width:20px;border-right:1px solid #6e6e6e"></div>
<div class="sgap" style="left:798px;width:10px"></div>
<div class="sb" style="left:808px;width:48px"></div>
<div class="sb" style="left:856px;width:20px"></div>
<div class="sb" style="left:876px;width:20px;border-right:1px solid #6e6e6e"></div>
<div class="sgap" style="left:897px;width:6px"></div>
<div class="sb" style="left:903px;width:161px"></div>
<div class="sb" style="left:1064px;width:21px;border-right:1px solid #6e6e6e"></div>
<div class="sgap" style="left:1086px;width:4px"></div>
<div class="sb" style="left:1090px;width:10px"></div>
<div class="sb" style="left:1100px;width:19px"></div>
<div class="t" style="left:827px;top:688px;font-size:12px;color:#222">1:1</div>
<div class="t" style="left:922px;top:689px;font-size:11px;color:#222;transform:scaleX(.925);transform-origin:0 0">2D рисование и аннотации</div>
<svg class="a" style="left:161px;top:683px" width="959" height="23" viewBox="161 683 959 23">
 <!-- snap -->
 <g fill="#444"><rect x="327" y="689" width="1.3" height="1.3"/><rect x="330" y="689" width="1.3" height="1.3"/><rect x="333" y="689" width="1.3" height="1.3"/><rect x="327" y="692" width="1.3" height="1.3"/><rect x="330" y="692" width="1.3" height="1.3"/><rect x="333" y="692" width="1.3" height="1.3"/><rect x="327" y="695" width="1.3" height="1.3"/><rect x="330" y="695" width="1.3" height="1.3"/><rect x="333" y="695" width="1.3" height="1.3"/><rect x="336.5" y="688" width="1.5" height="10"/><rect x="328" y="698" width="8" height="1.5"/></g>
 <!-- grid -->
 <rect x="345.5" y="687.5" width="12" height="12" fill="#f4f4f4" stroke="#444" stroke-width="1"/>
 <path d="M348.5 687.5 V699.5 M351.5 687.5 V699.5 M354.5 687.5 V699.5 M345.5 690.5 H357.5 M345.5 693.5 H357.5 M345.5 696.5 H357.5" stroke="#555" stroke-width=".8"/>
 <!-- ortho -->
 <path d="M365.5 687 V700.5 H380 M365.5 695.5 H370.5 V700.5" fill="none" stroke="#555" stroke-width=".9"/>
 <!-- polar -->
 <circle cx="391" cy="695" r="4.3" fill="none" stroke="#444" stroke-width="1.1"/><path d="M389 697 L397 689 M391 697 H398.5" stroke="#222" stroke-width="1.2"/>
 <!-- osnap -->
 <rect x="408.5" y="688.5" width="12.5" height="12" rx="1" fill="#f6f6fa" stroke="#555" stroke-width="1"/><circle cx="408.5" cy="688" r="1.8" fill="none" stroke="#e05a40" stroke-width=".8"/>
 <!-- otrack -->
 <path d="M430 698 L438.5 689 M430 698 H439" stroke="#345" stroke-width="1.3"/>
 <!-- ducs -->
 <path d="M449.5 687.5 V699.5 H461 M449.5 699.5 L455 694" fill="none" stroke="#345" stroke-width="1"/><path d="M458 687.5 L461 689.5 L458.5 692 L461 693.5" fill="none" stroke="#e8a020" stroke-width="1.4"/>
 <!-- dyn -->
 <path d="M470 693.5 H478 M473.5 689.5 V697.5" stroke="#111" stroke-width="1.3"/><rect x="476" y="694" width="6" height="4" fill="none" stroke="#222" stroke-width=".9"/>
 <!-- lwt -->
 <path d="M490 693 H503 M497 688 V700" stroke="#111" stroke-width="2"/>
 <!-- qp -->
 <rect x="513" y="688" width="8" height="11" rx="1" fill="#dfe6ee" stroke="#333" stroke-width="1"/><path d="M514.5 690.5 H519.5 M514.5 693 H519.5 M514.5 695.5 H519.5" stroke="#444" stroke-width=".9"/>
 <!-- model -->
 <rect x="664.5" y="687" width="14" height="11" fill="#f0f0f0" stroke="#444" stroke-width=".9"/><path d="M667 690 V697 H674 Z" fill="none" stroke="#333" stroke-width=".8"/><rect x="664" y="699.5" width="15" height="1.5" fill="#333"/>
 <!-- layout -->
 <rect x="685.5" y="687.5" width="7" height="8" fill="#f4f4f4" stroke="#444" stroke-width=".9"/><rect x="693.5" y="687.5" width="7" height="8" fill="#f4f4f4" stroke="#444" stroke-width=".9"/><rect x="685" y="698" width="16" height="2" fill="#333"/>
 <!-- pan -->
 <path d="M718 692.5 L721 690.5 L722.5 692 L724 689.5 L726.5 690.5 L727.5 693 L730 694 C731 697 729 700.5 725 700.5 C721.5 700.5 719.5 698 718 692.5 Z" fill="#eeeeee" stroke="#444" stroke-width=".8"/><path d="M729.5 686 V692 M726.5 689 H732.5" stroke="#111" stroke-width="1.2"/>
 <!-- zoom -->
 <circle cx="743" cy="692" r="4.5" fill="#f4f4f4" stroke="#333" stroke-width="1.2"/><path d="M746.5 695.5 L751 700" stroke="#333" stroke-width="2"/>
 <!-- wheel -->
 <circle cx="766" cy="694" r="6.3" fill="#e8e8e8" stroke="#444" stroke-width="1"/><circle cx="766" cy="694" r="3" fill="none" stroke="#555" stroke-width=".9"/><path d="M764 692 L768 696 M768 692 L764 696" stroke="#777" stroke-width=".6"/>
 <!-- showmotion -->
 <rect x="780" y="686.5" width="3.5" height="3" fill="#f4f4f4" stroke="#333" stroke-width=".7"/><rect x="785" y="686.5" width="3.5" height="3" fill="#f4f4f4" stroke="#333" stroke-width=".7"/><rect x="790" y="686.5" width="3.5" height="3" fill="#f4f4f4" stroke="#333" stroke-width=".7"/>
 <rect x="780.5" y="691" width="10" height="9" fill="#f4f4f4" stroke="#333" stroke-width=".8"/><path d="M784 693 L788 695.5 L784 698 Z" fill="#222"/>
 <!-- annot scale icon -->
 <path d="M816 687 V694 M816 694 L810 700 M816 694 L822 700" fill="none" stroke="#444" stroke-width="3.4" stroke-linecap="round"/><path d="M816 687 V694 M816 694 L810 700 M816 694 L822 700" fill="none" stroke="#f6f6f6" stroke-width="1.8" stroke-linecap="round"/>
 <path d="M846 691 H852 L849 694.5 Z" fill="#111"/>
 <path d="M865 687 V694 M865 694 L859 700 M865 694 L871 700" fill="none" stroke="#444" stroke-width="3.4" stroke-linecap="round"/><path d="M865 687 V694 M865 694 L859 700 M865 694 L871 700" fill="none" stroke="#f6f6f6" stroke-width="1.8" stroke-linecap="round"/><circle cx="870" cy="697" r="2.6" fill="#f0b820"/>
 <path d="M886 687 V694 M886 694 L880 700 M886 694 L892 700" fill="none" stroke="#a8a8a8" stroke-width="3.4" stroke-linecap="round"/><path d="M886 687 V694 M886 694 L880 700 M886 694 L892 700" fill="none" stroke="#d8d8d8" stroke-width="1.8" stroke-linecap="round"/>
 <!-- gear -->
 <path d="M918.21 693.43 L918.21 695.57 L916.49 695.52 L915.89 696.95 L917.14 698.14 L915.64 699.64 L914.45 698.39 L913.02 698.99 L913.07 700.71 L910.93 700.71 L910.98 698.99 L909.55 698.39 L908.36 699.64 L906.86 698.14 L908.11 696.95 L907.51 695.52 L905.79 695.57 L905.79 693.43 L907.51 693.48 L908.11 692.05 L906.86 690.86 L908.36 689.36 L909.55 690.61 L910.98 690.01 L910.93 688.29 L913.07 688.29 L913.02 690.01 L914.45 690.61 L915.64 689.36 L917.14 690.86 L915.89 692.05 L916.49 693.48 Z" fill="#ececec" stroke="#333" stroke-width=".9"/><circle cx="912" cy="694.5" r="2.3" fill="#bbb" stroke="#333" stroke-width=".9"/>
 <path d="M1054 689.5 H1061 L1057.5 693.5 Z" fill="#111"/>
 <!-- lock -->
 <rect x="1068.5" y="693.5" width="12" height="9" rx="1" fill="#f4f4f4" stroke="#333" stroke-width="1"/><path d="M1070.5 693.5 V690 C1070.5 685 1078.5 685 1078.5 690 V693.5" fill="none" stroke="#333" stroke-width="1.1"/><path d="M1074.5 696 V700" stroke="#333"/>
 <path d="M1092.5 692 H1097.5 L1095 695.5 Z" fill="#111"/>
 <!-- clean screen -->
 <rect x="1102.5" y="687.5" width="14" height="13" fill="#f4f4f4" stroke="#444" stroke-width="1"/><rect x="1103" y="688" width="13" height="2" fill="#888"/>
</svg>
<!-- presenter thumbnail -->
<div class="a" style="left:1238px;top:677px;width:27px;height:28px;background:linear-gradient(#c9ccd2,#a8aeb8)"></div>
<svg class="a" style="left:1238px;top:677px" width="27" height="28" viewBox="1238 677 27 28">
 <circle cx="1251.5" cy="683" r="3" fill="#5a4030"/>
 <path d="M1245 705 L1246 690 C1247 687 1256 687 1257 690 L1258 705 Z" fill="#1e2a4a"/>
 <path d="M1250 688 L1251.5 694 L1253 688 Z" fill="#e8e8f0"/>
</svg>


</body></html>
